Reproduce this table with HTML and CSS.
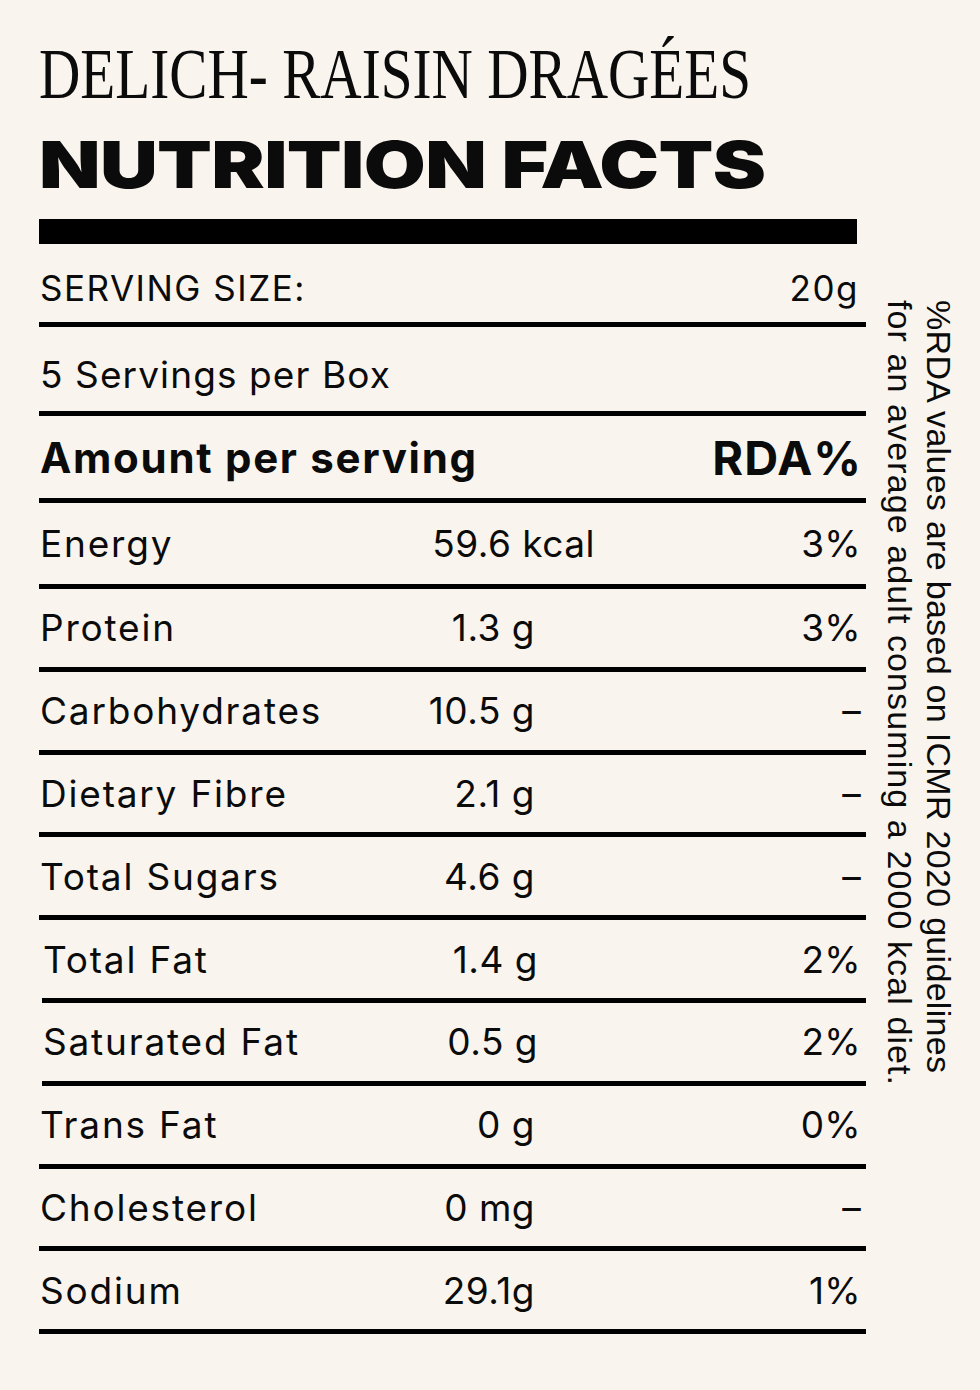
FILE: index.html
```html
<!DOCTYPE html>
<html lang="en">
<head>
<meta charset="utf-8">
<title>Delich Raisin Dragées – Nutrition Facts</title>
<link rel="stylesheet" href="styles.css">
</head>
<body>
<main class="page">
  <header class="header">
    <h1 class="brand"><span class="brand-text">DELICH- RAISIN DRAGÉES</span></h1>
    <h2 class="title"><span class="title-text">NUTRITION FACTS</span></h2>
    <div class="bar"></div>
  </header>
  <div class="body">
    <section class="table">
      <div class="row row-serving">
        <span class="caps">SERVING SIZE:</span>
        <span class="caps right">20g</span>
      </div>
      <div class="row row-box">
        <span>5 Servings per Box</span>
      </div>
      <div class="row row-head">
        <span class="head-label">Amount per serving</span>
        <span class="head-rda">RDA%</span>
      </div>
      <div class="row item first">
        <span class="label">Energy</span>
        <span class="value wide">59.6 kcal</span>
        <span class="rda">3%</span>
      </div>
      <div class="row item">
        <span class="label">Protein</span>
        <span class="value">1.3 g</span>
        <span class="rda">3%</span>
      </div>
      <div class="row item">
        <span class="label">Carbohydrates</span>
        <span class="value">10.5 g</span>
        <span class="rda">–</span>
      </div>
      <div class="row item">
        <span class="label">Dietary Fibre</span>
        <span class="value">2.1 g</span>
        <span class="rda">–</span>
      </div>
      <div class="row item">
        <span class="label">Total Sugars</span>
        <span class="value">4.6 g</span>
        <span class="rda">–</span>
      </div>
      <div class="row item shifted">
        <span class="label">Total Fat</span>
        <span class="value">1.4 g</span>
        <span class="rda">2%</span>
      </div>
      <div class="row item shifted">
        <span class="label">Saturated Fat</span>
        <span class="value">0.5 g</span>
        <span class="rda">2%</span>
      </div>
      <div class="row item">
        <span class="label">Trans Fat</span>
        <span class="value">0 g</span>
        <span class="rda">0%</span>
      </div>
      <div class="row item">
        <span class="label">Cholesterol</span>
        <span class="value">0 mg</span>
        <span class="rda">–</span>
      </div>
      <div class="row item">
        <span class="label">Sodium</span>
        <span class="value">29.1g</span>
        <span class="rda">1%</span>
      </div>
    </section>
    <aside class="note">
      <p class="note-text"><span class="note-line">%RDA values are based on ICMR 2020 guidelines</span><br><span class="note-line note-line-2">for an average adult consuming a 2000 kcal diet.</span></p>
    </aside>
  </div>
</main>
</body>
</html>
```

FILE: styles.css
```css
html, body {
  margin: 0;
  padding: 0;
}

body {
  background: #f9f5ee;
  color: #0b0b0b;
  font-family: "Inter", "Liberation Sans", sans-serif;
  width: 980px;
  height: 1390px;
  overflow: hidden;
}

.page {
  padding-left: 39px;
}

.header {
  padding-top: 34px;
}

.brand {
  margin: 0;
  font-family: "Liberation Serif", "DejaVu Serif", serif;
  font-weight: 400;
  font-size: 71px;
  line-height: 80px;
  height: 80px;
  white-space: nowrap;
}

.brand-text {
  display: inline-block;
  transform: scaleX(0.806);
  transform-origin: left center;
}

.title {
  margin: 19px 0 0;
  font-family: "Inter", "Liberation Sans", sans-serif;
  font-weight: 900;
  font-size: 64px;
  line-height: 64px;
  height: 64px;
  white-space: nowrap;
  letter-spacing: -0.5px;
}

.title-text {
  display: inline-block;
  transform: scaleX(1.25);
  transform-origin: left center;
}

.bar {
  margin-top: 22px;
  width: 818px;
  height: 25px;
  background: #000;
}

.body {
  display: flex;
  align-items: flex-start;
}

.table {
  width: 827px;
  flex: none;
}

.row {
  box-sizing: border-box;
  border-bottom: 5px solid #000;
  display: grid;
  align-items: center;
  padding-left: 1px;
  padding-right: 7px;
}

.row-serving {
  height: 83px;
  grid-template-columns: 1fr auto;
  padding-top: 10px;
  font-size: 35px;
  letter-spacing: 1.5px;
}

.row-box {
  height: 89px;
  padding-top: 10px;
  font-size: 37px;
  letter-spacing: 1.1px;
}

.row-head {
  height: 87px;
  grid-template-columns: 1fr auto;
  font-weight: 700;
}

.head-label {
  font-size: 42px;
  letter-spacing: 1.7px;
}

.head-rda {
  font-size: 47px;
  letter-spacing: 1px;
  font-weight: 700;
  margin-right: -3px;
}

.right {
  justify-self: end;
}

.item {
  height: 82.8px;
  grid-template-columns: 354px 141px 1fr;
  font-size: 37px;
  letter-spacing: 1.8px;
}

.item.first {
  height: 86px;
}

.item.shifted {
  margin-left: 3px;
}

.value {
  justify-self: end;
  letter-spacing: 0.5px;
}

.value.wide {
  margin-right: -60px;
}

.rda {
  justify-self: end;
  letter-spacing: 0.3px;
  margin-right: -2px;
}

.note {
  margin-left: 14px;
  margin-top: 56px;
  width: 78px;
  flex: none;
}

.note-text {
  margin: 0;
  writing-mode: vertical-rl;
  font-family: "Liberation Sans", "Arial", sans-serif;
  font-size: 34px;
  line-height: 39px;
  white-space: nowrap;
}

.note-line {
  letter-spacing: 0.3px;
}

.note-line-2 {
  letter-spacing: 1.1px;
}
```
